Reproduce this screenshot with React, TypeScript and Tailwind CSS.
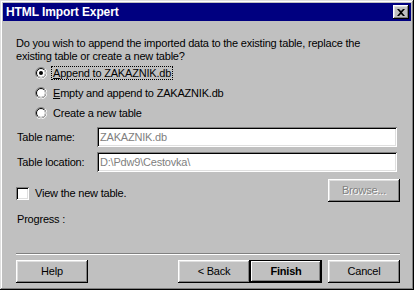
import React from "react";

const font = "font-['Liberation_Sans','Arial',sans-serif]";

function Radio({ checked }: { checked?: boolean }) {
  return (
    <span className="relative inline-block w-[12px] h-[12px] shrink-0">
      <svg width="12" height="12" viewBox="0 0 12 12" className="block">
        <circle cx="6" cy="6" r="5.5" fill="none" stroke="#808080" />
        <path d="M10.2 1.8 A5.5 5.5 0 0 1 1.8 10.2" fill="none" stroke="#ffffff" />
        <circle cx="6" cy="6" r="4.5" fill="#ffffff" stroke="#000000" />
        <path d="M9.2 2.8 A4.5 4.5 0 0 1 2.8 9.2" fill="none" stroke="#dfdfdf" />
        {checked && <circle cx="6" cy="6" r="2" fill="#000000" />}
      </svg>
    </span>
  );
}

function Button({
  children,
  className = "",
  isDefault,
  disabled,
}: {
  children: React.ReactNode;
  className?: string;
  isDefault?: boolean;
  disabled?: boolean;
}) {
  const bevel = isDefault
    ? "shadow-[inset_0_0_0_1px_#000,inset_-2px_-2px_#000,inset_2px_2px_#fff,inset_-3px_-3px_#808080]"
    : "shadow-[inset_-1px_-1px_#000,inset_1px_1px_#fff,inset_-2px_-2px_#808080,inset_2px_2px_#dfdfdf]";
  return (
    <div
      className={`h-[23px] w-[72px] flex items-center justify-center bg-[#c0c0c0] text-[11px] ${bevel} ${
        disabled ? "text-[#808080] [text-shadow:1px_1px_0_#fff]" : "text-black"
      } ${className}`}
    >
      {children}
    </div>
  );
}

function Field({ value }: { value: string }) {
  return (
    <div className="h-[20px] w-[300px] bg-white flex items-center pl-[3px] text-[11px] text-[#808080] shadow-[inset_1px_1px_#808080,inset_-1px_-1px_#fff,inset_2px_2px_#000,inset_-2px_-2px_#dfdfdf]">
      {value}
    </div>
  );
}

export default function App() {
  return (
    <div className={`w-[414px] h-[290px] bg-[#c0c0c0] ${font} text-[11px] tracking-[-0.2px] text-black leading-[13px] flex flex-col p-[3px] shadow-[inset_-1px_-1px_#000,inset_1px_1px_#dfdfdf,inset_-2px_-2px_#808080,inset_2px_2px_#fff]`}>
      {/* Title bar */}
      <div className="h-[18px] bg-[#000080] flex items-center justify-between pl-[3px] pr-[2px]">
        <span className="text-white font-bold text-[12px] tracking-[-0.1px]">HTML Import Expert</span>
        <div className="w-[16px] h-[14px] bg-[#c0c0c0] flex items-center justify-center shadow-[inset_-1px_-1px_#000,inset_1px_1px_#fff,inset_-2px_-2px_#808080,inset_2px_2px_#dfdfdf]">
          <svg width="8" height="7" viewBox="0 0 8 7">
            <path d="M0 0h2l2 2 2-2h2L5 3.5 8 7H6L4 5 2 7H0l3-3.5z" fill="#000" />
          </svg>
        </div>
      </div>

      {/* Body */}
      <div className="flex flex-col pl-[13px] pr-[10px]">
        <p className="mt-[16px] w-[380px]">
          Do you wish to append the imported data to the existing table, replace the existing table or create a new table?
        </p>

        <div className="flex flex-col pl-[19px]">
          <div className="h-[20px] flex items-center gap-[5px]">
            <Radio checked />
            <span className="outline outline-1 outline-dotted outline-black px-[1px] leading-[12px]">
              <span className="underline">A</span>ppend to ZAKAZNIK.db
            </span>
          </div>
          <div className="h-[20px] flex items-center gap-[6px]">
            <Radio />
            <span>
              <span className="underline">E</span>mpty and append to ZAKAZNIK.db
            </span>
          </div>
          <div className="h-[20px] flex items-center gap-[6px]">
            <Radio />
            <span>Create a new table</span>
          </div>
        </div>

        <div className="mt-[4px] flex items-center pl-[1px]">
          <span className="w-[80px]">Table name:</span>
          <Field value="ZAKAZNIK.db" />
        </div>
        <div className="mt-[5px] flex items-center pl-[1px]">
          <span className="w-[80px]">Table location:</span>
          <Field value="D:\Pdw9\Cestovka\" />
        </div>

        <div className="flex justify-between items-start mt-[7px]">
          <div className="flex items-center gap-[6px] mt-[8px]">
            <span className="w-[13px] h-[13px] bg-white shadow-[inset_1px_1px_#808080,inset_-1px_-1px_#fff,inset_2px_2px_#000,inset_-2px_-2px_#dfdfdf]" />
            <span>View the new table.</span>
          </div>
          <Button disabled className="mr-[1px]">Browse...</Button>
        </div>

        <div className="mt-[11px] pl-[1px]">Progress :</div>

        <div className="mt-[27px] h-[2px] w-[384px] border-t border-t-[#808080] border-b border-b-white" />

        <div className="mt-[5px] flex items-center w-[384px]">
          <Button>Help</Button>
          <div className="flex-1" />
          <Button>&lt; Back</Button>
          <Button isDefault>
            <span className="font-bold">Finish</span>
          </Button>
          <Button className="ml-[6px]">Cancel</Button>
        </div>
      </div>
    </div>
  );
}
